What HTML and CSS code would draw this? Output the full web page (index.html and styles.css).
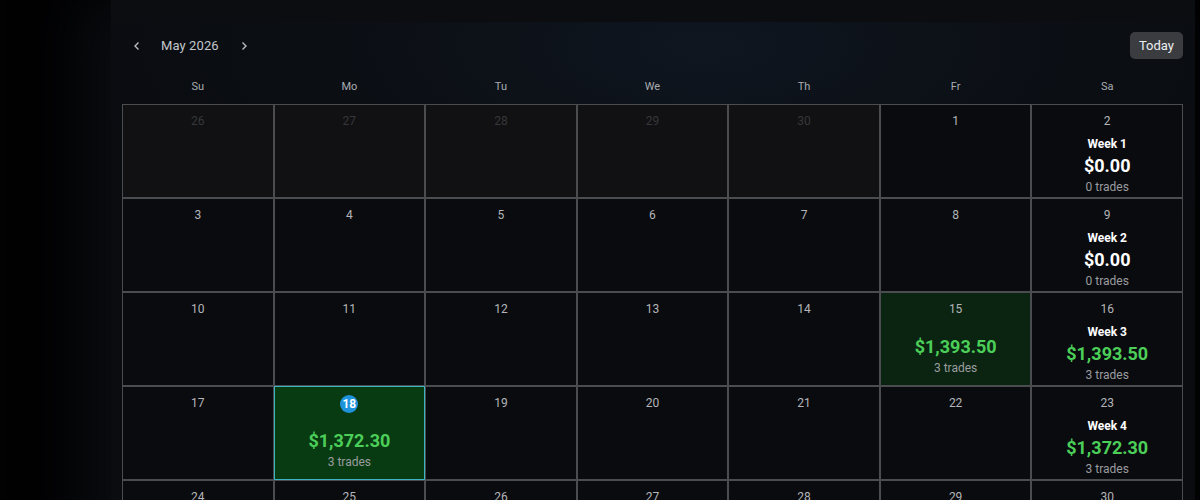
FILE: index.html
```html
<!DOCTYPE html>
<html lang="en">

<head>
    <meta charset="UTF-8">
    <title>P&amp;L Calendar</title>
    <link rel="stylesheet" href="styles.css">
</head>

<body>
    <section class="panel">
        <div class="panel-head"></div>
        <div class="cal">
            <div class="cal-nav">
                <div class="month-switch">
                    <button class="arrow" id="prev">
                        <svg width="8" height="10" viewBox="0 0 8 10"><path d="M5.5 1.5 2 5l3.5 3.5" fill="none" stroke="#b8bcc2" stroke-width="1.4"/></svg>
                    </button>
                    <span class="month-name">May 2026</span>
                    <button class="arrow" id="next">
                        <svg width="8" height="10" viewBox="0 0 8 10"><path d="M2.5 1.5 6 5 2.5 8.5" fill="none" stroke="#b8bcc2" stroke-width="1.4"/></svg>
                    </button>
                </div>
                <button class="today-btn">Today</button>
            </div>

            <div class="weekdays">
                <span>Su</span><span>Mo</span><span>Tu</span><span>We</span><span>Th</span><span>Fr</span><span>Sa</span>
            </div>

            <div class="days">
                <!-- week 1 -->
                <div class="day muted"><div class="num">26</div></div>
                <div class="day muted"><div class="num">27</div></div>
                <div class="day muted"><div class="num">28</div></div>
                <div class="day muted"><div class="num">29</div></div>
                <div class="day muted"><div class="num">30</div></div>
                <div class="day"><div class="num">1</div></div>
                <div class="day week">
                    <div class="num">2</div>
                    <div class="wk">Week 1</div>
                    <div class="amt">$0.00</div>
                    <div class="trades">0 trades</div>
                </div>
                <!-- week 2 -->
                <div class="day"><div class="num">3</div></div>
                <div class="day"><div class="num">4</div></div>
                <div class="day"><div class="num">5</div></div>
                <div class="day"><div class="num">6</div></div>
                <div class="day"><div class="num">7</div></div>
                <div class="day"><div class="num">8</div></div>
                <div class="day week">
                    <div class="num">9</div>
                    <div class="wk">Week 2</div>
                    <div class="amt">$0.00</div>
                    <div class="trades">0 trades</div>
                </div>
                <!-- week 3 -->
                <div class="day"><div class="num">10</div></div>
                <div class="day"><div class="num">11</div></div>
                <div class="day"><div class="num">12</div></div>
                <div class="day"><div class="num">13</div></div>
                <div class="day"><div class="num">14</div></div>
                <div class="day win">
                    <div class="num">15</div>
                    <div class="amt green">$1,393.50</div>
                    <div class="trades">3 trades</div>
                </div>
                <div class="day week">
                    <div class="num">16</div>
                    <div class="wk">Week 3</div>
                    <div class="amt green">$1,393.50</div>
                    <div class="trades">3 trades</div>
                </div>
                <!-- week 4 -->
                <div class="day"><div class="num">17</div></div>
                <div class="day win today">
                    <div class="num"><span class="dot">18</span></div>
                    <div class="amt green">$1,372.30</div>
                    <div class="trades">3 trades</div>
                </div>
                <div class="day"><div class="num">19</div></div>
                <div class="day"><div class="num">20</div></div>
                <div class="day"><div class="num">21</div></div>
                <div class="day"><div class="num">22</div></div>
                <div class="day week">
                    <div class="num">23</div>
                    <div class="wk">Week 4</div>
                    <div class="amt green">$1,372.30</div>
                    <div class="trades">3 trades</div>
                </div>
                <!-- week 5 -->
                <div class="day"><div class="num">24</div></div>
                <div class="day"><div class="num">25</div></div>
                <div class="day"><div class="num">26</div></div>
                <div class="day"><div class="num">27</div></div>
                <div class="day"><div class="num">28</div></div>
                <div class="day"><div class="num">29</div></div>
                <div class="day week">
                    <div class="num">30</div>
                    <div class="wk">Week 5</div>
                    <div class="amt">$0.00</div>
                    <div class="trades">0 trades</div>
                </div>
            </div>
        </div>
    </section>
</body>

</html>
```

FILE: styles.css
```css
* {
    margin: 0;
    padding: 0;
    box-sizing: border-box;
}

html,
body {
    height: 100%;
    overflow: hidden;
    background: #020203;
    font-family: Roboto, "Liberation Sans", Arial, sans-serif;
}

.panel {
    width: 1084px;
    min-height: 100%;
    margin-left: 111px;
    background: radial-gradient(ellipse 60% 45% at 55% 8%, #0f1620 0%, #0b0e13 60%, #0a0c10 100%);
    box-shadow: -30px 0 50px rgba(12, 14, 19, 0.85);
}

.panel-head {
    height: 22px;
    background: #0b0d11;
}

.cal {
    padding: 10px 11px 0 11px;
}

.cal-nav {
    display: flex;
    justify-content: space-between;
    align-items: center;
    height: 27px;
    padding-right: 1px;
}

.month-switch {
    display: flex;
    align-items: center;
}

.arrow {
    width: 10px;
    height: 12px;
    display: flex;
    align-items: center;
    justify-content: center;
    background: none;
    border: none;
    cursor: pointer;
    margin-left: 10px;
}

#next {
    margin-left: 20px;
}

.month-name {
    margin-left: 19px;
    font-size: 13px;
    color: #c3c7cd;
    letter-spacing: 0.1px;
}

.today-btn {
    width: 53px;
    height: 27px;
    background-color: #3a3c40;
    border: none;
    border-radius: 5px;
    color: #eceef0;
    font-family: Roboto, "Liberation Sans", Arial, sans-serif;
    font-size: 13px;
    cursor: pointer;
}

.weekdays {
    display: grid;
    grid-template-columns: repeat(7, 1fr);
    width: 1061px;
    margin-top: 19px;
    margin-bottom: 8px;
    line-height: 18px;
    text-align: center;
    font-size: 11px;
    color: #a9adb3;
}

.days {
    display: grid;
    grid-template-columns: repeat(7, 1fr);
    grid-auto-rows: 94px;
    width: 1061px;
}

.day {
    border: 1px solid #4b4c4f;
    background-color: #0a0b0f;
    padding-top: 9px;
    text-align: center;
}

.num {
    line-height: 14px;
    font-size: 12px;
    color: #b3b5b8;
}

.day.muted {
    background-color: #111113;
}

.day.muted .num {
    color: #36373a;
}

.day.win {
    background-color: #0b2411;
}

.day.today {
    background-color: #093b12;
    border-color: #3bb3c2;
}

.dot {
    display: inline-block;
    width: 18px;
    height: 18px;
    margin: -1px 0 -3px;
    border-radius: 50%;
    background-color: #1e93dc;
    color: #fff;
    font-weight: bold;
    font-size: 12px;
    line-height: 18px;
}

.wk {
    margin-top: 8px;
    line-height: 16px;
    font-size: 12px;
    font-weight: bold;
    color: #fff;
}

.amt {
    margin-top: 3px;
    line-height: 22px;
    font-size: 18px;
    font-weight: bold;
    color: #fff;
}

.amt.green {
    color: #4ccf59;
}

.day.win .amt {
    margin-top: 20px;
}

.day.today .amt {
    margin-top: 19px;
}

.trades {
    margin-top: 2px;
    line-height: 16px;
    font-size: 12px;
    color: #9a9c9f;
}
```
